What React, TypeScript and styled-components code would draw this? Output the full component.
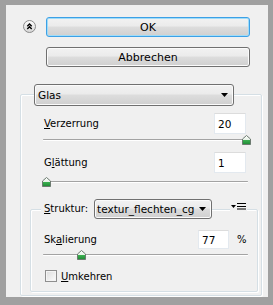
import React from 'react'
import styled, { createGlobalStyle } from 'styled-components'

const GlobalStyle = createGlobalStyle`
    html, body {
        margin: 0;
        padding: 0;
        background: #a0a0a0;
    }
    body {
        font-family: "DejaVu Sans", "Liberation Sans", sans-serif;
        font-size: 10px;
        color: #000;
    }
`;
const Window = styled.div`
    box-sizing: border-box;
    width: 273px;
    height: 305px;
    border-style: solid;
    border-color: #a0a0a0;
    border-width: 5px 5px 8px 6px;
    background: #f0f0f0;
    display: flex;
    flex-direction: column;
    overflow: hidden;
`;
const TopRow = styled.div`
    display: flex;
    align-items: flex-start;
    gap: 10px;
    padding: 12px 0 0 17px;
`;
const Collapse = styled.svg`
    margin-top: 3px;
    flex: none;
`;
const ButtonColumn = styled.div`
    display: flex;
    flex-direction: column;
    gap: 10px;
    width: 204px;
`;
const Button = styled.button<{ $default?: boolean }>`
    box-sizing: border-box;
    width: 100%;
    height: 20px;
    padding: 0;
    border: 1px solid ${p => (p.$default ? '#3ca0e6' : '#707070')};
    border-radius: 3px;
    background: linear-gradient(#f2f2f2 0%, #ebebeb 45%, #dddddd 50%, #cfcfcf 100%);
    box-shadow: inset 0 0 0 1px ${p => (p.$default ? '#9fdcf8' : '#fbfbfb')};
    font-family: inherit;
    font-size: 11px;
    color: #000;
`;
const Group = styled.div`
    border: 1px solid #d5dfe5;
    border-radius: 2px;
    box-shadow: inset 1px 1px 0 #fff, 1px 1px 0 #fff;
    display: flex;
    flex-direction: column;
    flex: 1;
`;
const FilterGroup = styled(Group)`
    margin: 27px 6px 1px 14px;
`;
const TextureGroup = styled(Group)`
    margin: 22px 3px 3px 9px;
`;
const GroupHead = styled.div<{ $indent: number }>`
    display: flex;
    align-items: center;
    margin: -11px 0 0 ${p => p.$indent}px;
`;
const HeadLabel = styled.span`
    background: #f0f0f0;
    padding: 0 6px 0 3px;
    line-height: 20px;
`;
const HeadIcon = styled.svg`
    align-self: flex-start;
    margin: 4px 10px 0 auto;
    padding: 0 1px;
    background: #f0f0f0;
    box-sizing: content-box;
`;
const Select = styled.div<{ $width: number; $height: number; $pad: number }>`
    box-sizing: border-box;
    width: ${p => p.$width}px;
    height: ${p => p.$height}px;
    display: flex;
    align-items: center;
    justify-content: space-between;
    padding: 0 5px 0 ${p => p.$pad}px;
    border: 1px solid #707070;
    border-radius: 3px;
    background: linear-gradient(#f2f2f2 0%, #ebebeb 45%, #dddddd 50%, #cfcfcf 100%);
    box-shadow: inset 0 0 0 1px #fbfbfb;
    font-size: 10.5px;
`;
const Fields = styled.div<{ $left: number; $right: number }>`
    display: flex;
    flex-direction: column;
    padding: 0 ${p => p.$right}px 0 ${p => p.$left}px;
`;
const ParamRow = styled.div<{ $top: number; $height: number }>`
    display: flex;
    align-items: center;
    justify-content: space-between;
    height: ${p => p.$height}px;
    margin-top: ${p => p.$top}px;
`;
const ValueGroup = styled.div`
    display: flex;
    align-items: center;
    gap: 8px;
`;
const NumberBox = styled.div<{ $width: number; $height: number }>`
    box-sizing: border-box;
    width: ${p => p.$width}px;
    height: ${p => p.$height}px;
    display: flex;
    align-items: center;
    padding-left: 3px;
    background: #fff;
    border: 1px solid #e3e9ef;
    border-top-color: #dcdcdc;
    font-size: 10.5px;
`;
const Unit = styled.span`
    width: 9px;
`;
const Slider = styled.div<{ $top: number }>`
    position: relative;
    height: 10px;
    margin: ${p => p.$top}px -2px 0 -1px;
`;
const Track = styled.div`
    position: absolute;
    left: 0;
    right: 0;
    top: 4px;
    height: 1px;
    background: #a3a3a3;
    border-radius: 1px;
    box-shadow: 0 1px 0 #fff;
`;
const Thumb = styled.svg`
    position: absolute;
    top: 0;
`;
const CheckRow = styled.label`
    display: flex;
    align-items: center;
    gap: 4px;
    margin: 10px 0 0 1px;
`;
const CheckBox = styled.span`
    box-sizing: border-box;
    width: 12px;
    height: 12px;
    border: 1px solid #8f8f8f;
    background: linear-gradient(135deg, #dcdcdc, #fdfdfd);
    box-shadow: inset 0 0 0 1px #f4f4f4;
`;
const U = styled.span`
    text-decoration: underline;
`;

const Arrow = () => (
    <svg width="7" height="4" viewBox="0 0 7 4">
        <polygon points="0,0 7,0 3.5,4" fill="#000" />
    </svg>
)

const SliderControl = ({ frac, top }: { frac: number; top: number }) => (
    <Slider $top={top}>
        <Track />
        <Thumb width="9" height="10" viewBox="0 0 9 10" style={{ left: `${3 + frac * 200 - 4.5}px` }}>
            <defs>
                <linearGradient id="thumbFill" x1="0" y1="0" x2="0" y2="1">
                    <stop offset="0" stopColor="#ffffff" />
                    <stop offset="0.45" stopColor="#e8f3e8" />
                    <stop offset="0.55" stopColor="#3aae4e" />
                    <stop offset="1" stopColor="#1f8a35" />
                </linearGradient>
            </defs>
            <path d="M4.5 0.5 L8.5 4 V9.5 H0.5 V4 Z" fill="url(#thumbFill)" stroke="#6d7a70" strokeWidth="1" />
        </Thumb>
    </Slider>
)

const App = () => {
    return (
        <Window>
            <GlobalStyle />
            <TopRow>
                <Collapse width="13" height="13" viewBox="0 0 13 13">
                    <defs>
                        <linearGradient id="collapseFill" x1="0" y1="0" x2="0" y2="1">
                            <stop offset="0" stopColor="#ffffff" />
                            <stop offset="1" stopColor="#d4d4d4" />
                        </linearGradient>
                    </defs>
                    <circle cx="6.5" cy="6.5" r="6" fill="url(#collapseFill)" stroke="#8a8a8a" />
                    <path d="M4.3 6.3 L6.5 4.1 L8.7 6.3 M4.3 9 L6.5 6.8 L8.7 9" fill="none" stroke="#000" strokeWidth="1.4" />
                </Collapse>
                <ButtonColumn>
                    <Button $default>OK</Button>
                    <Button>Abbrechen</Button>
                </ButtonColumn>
            </TopRow>
            <FilterGroup>
                <GroupHead $indent={13}>
                    <Select $width={200} $height={22} $pad={3}>
                        Glas
                        <Arrow />
                    </Select>
                </GroupHead>
                <Fields $left={23} $right={15}>
                    <ParamRow $top={7} $height={21}>
                        <span><U>V</U>erzerrung</span>
                        <NumberBox $width={32} $height={21}>20</NumberBox>
                    </ParamRow>
                    <SliderControl frac={1} top={1} />
                    <ParamRow $top={7} $height={21}>
                        <span>G<U>l</U>ättung</span>
                        <NumberBox $width={32} $height={21}>1</NumberBox>
                    </ParamRow>
                    <SliderControl frac={0} top={4} />
                </Fields>
                <TextureGroup>
                    <GroupHead $indent={10}>
                        <HeadLabel><U>S</U>truktur:</HeadLabel>
                        <Select $width={118} $height={20} $pad={2}>
                            textur_flechten_cg
                            <Arrow />
                        </Select>
                        <HeadIcon width="15" height="8" viewBox="0 0 15 8">
                            <polygon points="0,2 5,2 2.5,5" fill="#000" />
                            <rect x="6" y="0" width="9" height="1" fill="#000" />
                            <rect x="6" y="3" width="9" height="1" fill="#000" />
                            <rect x="6" y="5.5" width="9" height="1" fill="#000" />
                        </HeadIcon>
                    </GroupHead>
                    <Fields $left={13} $right={11}>
                        <ParamRow $top={11} $height={19}>
                            <span>Sk<U>a</U>lierung</span>
                            <ValueGroup>
                                <NumberBox $width={31} $height={19}>77</NumberBox>
                                <Unit>%</Unit>
                            </ValueGroup>
                        </ParamRow>
                        <SliderControl frac={0.1775} top={1} />
                        <CheckRow>
                            <CheckBox />
                            <span><U>U</U>mkehren</span>
                        </CheckRow>
                    </Fields>
                </TextureGroup>
            </FilterGroup>
        </Window>
    )
}

export default App
